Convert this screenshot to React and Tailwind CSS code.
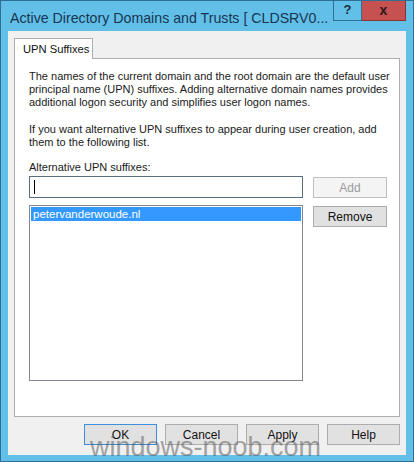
import React from "react";

const ui = { fontFamily: '"Liberation Sans", Arial, sans-serif' };

const DlgButton = ({ children, isDefault, disabled }) => (
  <button
    className={
      disabled
        ? "w-[74px] h-[21px] border border-[#bfbfbf] bg-[#f4f4f4] text-[#9a9a9a] text-[12px] leading-none"
        : isDefault
        ? "w-[73px] h-[21px] border border-[#3c8fd8] bg-[#e1e1e1] text-[#111] text-[12px] leading-none"
        : "w-[73px] h-[21px] border border-[#adadad] bg-[#e1e1e1] text-[#111] text-[12px] leading-none"
    }
  >
    {children}
  </button>
);

export default function App() {
  return (
    <div
      className="relative w-[414px] h-[462px] overflow-hidden border border-[#2f6f95] bg-[#62c0e8] flex flex-col"
      style={ui}
    >
      {/* title bar */}
      <div className="h-[30px] flex items-start shrink-0">
        <div className="flex-1 min-w-0 pl-[9px] pt-[8px] text-[14.2px] leading-[18px] text-[#173552] whitespace-nowrap overflow-hidden">
          Active Directory Domains and Trusts [ CLDSRV0...
        </div>
        <div className="flex mr-[7px] -mt-px">
          <div className="w-[29px] h-[21px] border border-t-0 border-[#2f6f95] flex items-center justify-center text-[13px] font-bold text-[#1c2b3a]">
            ?
          </div>
          <div className="w-[44px] h-[21px] bg-[#c75050] border border-t-0 border-l-0 border-[#8a3333] flex items-center justify-center text-[14px] font-bold text-[#2a1a1a]">
            x
          </div>
        </div>
      </div>

      {/* client area */}
      <div className="mx-[7px] mb-[6px] flex-1 bg-[#f0f0f0] flex flex-col px-[6px] pt-[7px]">
        {/* tab */}
        <div className="flex">
          <div className="w-[79px] h-[21px] -mb-px z-10 bg-white border border-b-0 border-[#adadad] pl-[8px] pt-[3px] text-[11.2px] leading-[14px] text-[#111] whitespace-nowrap">
            UPN Suffixes
          </div>
        </div>
        {/* panel */}
        <div className="h-[359px] bg-white border border-[#adadad] pl-[14px] pt-[11px] text-[11px] leading-[13px] text-[#1a1a1a]">
          <p className="whitespace-nowrap">
            The names of the current domain and the root domain are the default user
            <br />
            principal name (UPN) suffixes. Adding alternative domain names provides
            <br />
            additional logon security and simplifies user logon names.
          </p>
          <p className="mt-[14px] whitespace-nowrap">
            If you want alternative UPN suffixes to appear during user creation, add
            <br />
            them to the following list.
          </p>
          <div className="mt-[12px]">Alternative UPN suffixes:</div>
          <div className="mt-[2px] flex gap-[10px]">
            <div className="w-[274px] flex flex-col gap-[7px]">
              <div className="h-[22px] border border-[#5a6e80] bg-white flex items-center pl-[4px]">
                <div className="w-px h-[14px] bg-black" />
              </div>
              <div className="h-[176px] border border-[#828790] bg-white p-px">
                <div className="h-[14px] bg-[#3399ff] text-white text-[11.5px] leading-[14px] pl-[2px]">
                  petervanderwoude.nl
                </div>
              </div>
            </div>
            <div className="flex flex-col gap-[8px] pt-px">
              <DlgButton disabled>Add</DlgButton>
              <button className="w-[74px] h-[21px] border border-[#adadad] bg-[#e1e1e1] text-[#111] text-[12px] leading-none">
                Remove
              </button>
            </div>
          </div>
        </div>
        {/* bottom buttons */}
        <div className="mt-[7px] flex justify-end gap-[8px]">
          <DlgButton isDefault>OK</DlgButton>
          <DlgButton>Cancel</DlgButton>
          <DlgButton>Apply</DlgButton>
          <DlgButton>Help</DlgButton>
        </div>
      </div>

      {/* watermark */}
      <div className="absolute left-[89px] top-[431px] text-[27px] leading-[30px] text-[#555] opacity-50 pointer-events-none">
        windows-noob.com
      </div>
    </div>
  );
}
